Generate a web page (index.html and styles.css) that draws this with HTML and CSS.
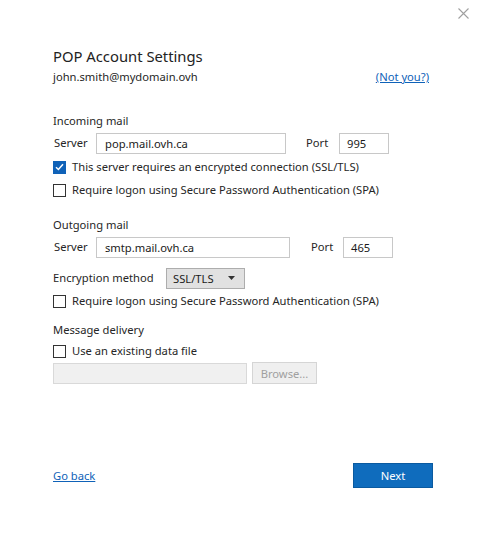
FILE: index.html
```html
<!DOCTYPE html>
<html>
<head>
<meta charset="utf-8">
<link rel="stylesheet" href="styles.css">
</head>
<body>
<div class="window">
  <button class="close" aria-label="Close">
    <svg width="11" height="11" viewBox="0 0 11 11"><path d="M0.5 0.5 L10.5 10.5 M10.5 0.5 L0.5 10.5" stroke="#a0a0a0" stroke-width="1.1" fill="none"/></svg>
  </button>
  <div class="dialog">
    <h1 class="title">POP Account Settings</h1>
    <div class="account">
      <span>john.smith@mydomain.ovh</span>
      <a class="link" href="#">(Not you?)</a>
    </div>

    <section class="group incoming">
      <div class="group-title">Incoming mail</div>
      <div class="row server-row">
        <label class="lbl srv-lbl">Server</label>
        <div class="input server-in">pop.mail.ovh.ca</div>
        <label class="lbl port-lbl">Port</label>
        <div class="input port-in">995</div>
      </div>
      <div class="check first"><span class="box checked"><svg width="9" height="8" viewBox="0 0 9 8"><path d="M1 4.2 L3.4 6.5 L8 1.2" stroke="#fff" stroke-width="1.5" fill="none"/></svg></span>This server requires an encrypted connection (SSL/TLS)</div>
      <div class="check"><span class="box"></span>Require logon using Secure Password Authentication (SPA)</div>
    </section>

    <section class="group outgoing">
      <div class="group-title">Outgoing mail</div>
      <div class="row server-row">
        <label class="lbl srv-lbl">Server</label>
        <div class="input server-in out">smtp.mail.ovh.ca</div>
        <label class="lbl port-lbl out">Port</label>
        <div class="input port-in">465</div>
      </div>
      <div class="row enc-row">
        <label class="lbl enc-lbl">Encryption method</label>
        <div class="select">SSL/TLS<svg width="7" height="4" viewBox="0 0 7 4"><path d="M0 0 H7 L3.5 4 Z" fill="#333"/></svg></div>
      </div>
      <div class="check"><span class="box"></span>Require logon using Secure Password Authentication (SPA)</div>
    </section>

    <section class="group delivery">
      <div class="group-title">Message delivery</div>
      <div class="check"><span class="box"></span>Use an existing data file</div>
      <div class="row file-row">
        <div class="input disabled file-in"></div>
        <button class="browse">Browse...</button>
      </div>
    </section>

    <div class="footer">
      <a class="link" href="#">Go back</a>
      <button class="next">Next</button>
    </div>
  </div>
</div>
</body>
</html>
```

FILE: styles.css
```css
* { box-sizing: border-box; }
html, body { margin: 0; padding: 0; background: #fff; }
body {
  font-family: "Noto Sans", "Open Sans", sans-serif;
  font-size: 11.2px;
  color: #262626;
  width: 484px;
  height: 555px;
  overflow: hidden;
}
.window { position: relative; width: 484px; height: 555px; }
.close {
  position: absolute; top: 8px; right: 15px;
  border: 0; background: none; padding: 0; width: 11px; height: 11px;
  display: block;
}
.close svg { display: block; }
.dialog { padding: 45px 55px 0 53px; }
.title {
  margin: 0;
  font-size: 14.8px;
  font-weight: 400;
  color: #222;
  line-height: 22px;
}
.account {
  display: flex; justify-content: space-between;
  line-height: 16px; margin-top: 2px;
}
.link { color: #0f62b8; text-decoration: underline; }
.group { margin-top: 28px; }
.group.outgoing { margin-top: 19px; }
.group.delivery { margin-top: 13px; }
.group-title { line-height: 16px; }
.row { display: flex; align-items: center; }
.server-row { margin-top: 3px; height: 22px; }
.lbl { line-height: 16px; flex: none; }
.srv-lbl { width: 43px; padding-left: 1px; }
.input {
  height: 21px; border: 1px solid #c8c8c8; background: #fff;
  padding: 0 8px; line-height: 19px; color: #1a1a1a; flex: none;
}
.server-in { width: 190px; }
.server-in.out { width: 194px; }
.port-lbl { margin-left: 20px; width: 33px; }
.port-lbl.out { margin-left: 21px; width: 32px; }
.port-in { width: 50px; padding-left: 7px; }
.check { display: flex; align-items: center; line-height: 16px; margin-top: 7px; }
.check.first { margin-top: 5px; }
.box {
  width: 13px; height: 13px; border: 1px solid #333; background: #fff;
  margin-right: 6px; display: flex; align-items: center; justify-content: center;
  flex: none;
}
.box.checked { background: #0f62b8; border-color: #0f62b8; }
.box svg { display: block; }
.enc-row { margin-top: 9px; height: 22px; }
.enc-lbl { width: 113px; }
.select {
  width: 79px; height: 21px;
  background: #e1e1e1; border: 1px solid #adadad;
  display: flex; align-items: center; justify-content: space-between;
  padding: 0 9px 0 6px; color: #1a1a1a;
}
.outgoing .check { margin-top: 4px; }
.delivery .check { margin-top: 5px; }
.file-row { margin-top: 3px; }
.file-in { width: 194px; background: #f0f0f0; border-color: #d9d9d9; height: 21px; }
.browse {
  margin-left: 5px; width: 65px; height: 22px;
  background: #efefef; border: 1px solid #d5d5d5; color: #a0a0a0;
  font-family: inherit; font-size: 11.2px; padding: 0;
}
.footer {
  display: flex; justify-content: space-between; align-items: center;
  margin-top: 79px; width: 380px;
}
.next {
  width: 80px; height: 25px; background: #0f6cbd; color: #fff;
  border: 1px solid #0a5aa0; font-family: inherit; font-size: 11.2px; padding: 0;
}
```
